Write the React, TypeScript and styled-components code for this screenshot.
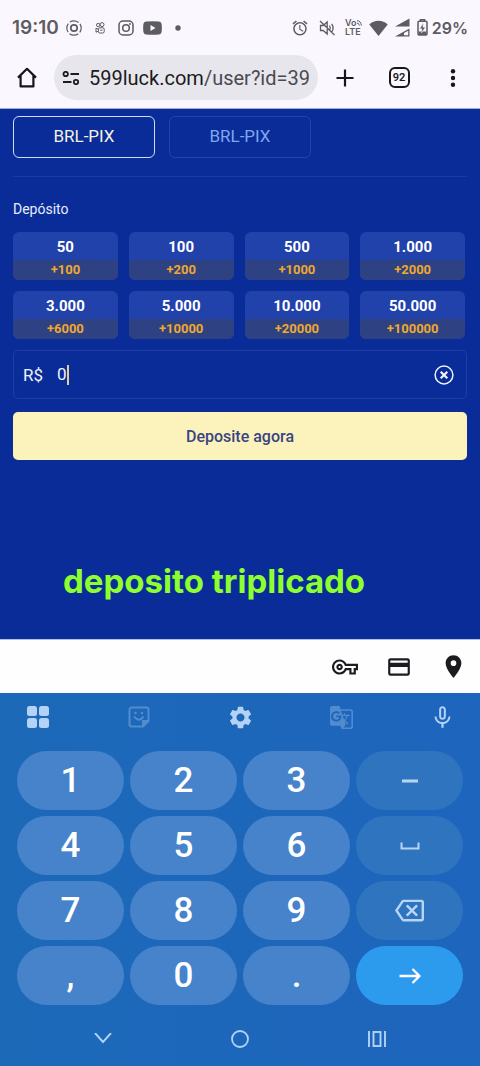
import React, { useState } from "react";
import styled, { createGlobalStyle } from "styled-components";
import {
  MdAlarm,
  MdGTranslate,
  MdLocationOn,
  MdMicNone,
  MdOutlineBackspace,
  MdOutlineCreditCard,
  MdOutlineVpnKey,
  MdSettings,
} from "react-icons/md";

const GlobalStyle = createGlobalStyle`
  *, *::before, *::after { box-sizing: border-box; }
  body { margin: 0; background: #1c67ba; font-family: Roboto, "Liberation Sans", sans-serif; }
  button, input { font-family: inherit; }
  button { border: 0; padding: 0; background: none; color: inherit; cursor: pointer; }
  svg { display: block; flex: none; }
`;

const Screen = styled.div`
  display: flex;
  flex-direction: column;
  min-height: 100vh;
`;

const StatusBar = styled.div`
  display: flex;
  justify-content: space-between;
  align-items: center;
  height: 55px;
  padding: 0 12px;
  background: #faf7fe;
  color: #5d5c61;
`;

const StatusGroup = styled.div`
  display: flex;
  align-items: center;
`;

const Clock = styled.time`
  width: 49px;
  font-family: Inter, sans-serif;
  font-size: 19px;
  font-weight: 600;
  line-height: 24px;
`;

const Battery = styled.span`
  font-family: Inter, sans-serif;
  font-size: 16px;
  font-weight: 600;
  line-height: 24px;
`;

const StatusSlot = styled.span<{ $width: number }>`
  display: flex;
  justify-content: center;
  width: ${(p) => p.$width}px;
`;

const Volte = styled.span`
  font-family: Inter, sans-serif;
  font-size: 9px;
  font-weight: 600;
  line-height: 8px;
`;

const VolteRow = styled.span`
  display: flex;
  align-items: center;
  gap: 1px;
  margin-bottom: 1px;
`;

const BrowserBar = styled.header`
  display: flex;
  align-items: center;
  height: 54px;
  padding-bottom: 8px;
  background: #faf7fe;
  border-bottom: 1px solid #9fb0da;
  color: #17171b;
`;

const BarButton = styled.button`
  display: flex;
  align-items: center;
  justify-content: center;
  flex: none;
  width: 54px;
  height: 45px;
`;

const AddressBar = styled.button`
  display: flex;
  align-items: center;
  flex: 1;
  min-width: 0;
  height: 45px;
  padding: 0 6px 0 8px;
  gap: 9px;
  border-radius: 23px;
  background: #e7e6ed;
`;

const Url = styled.span`
  overflow: hidden;
  white-space: nowrap;
  text-align: left;
  font-size: 20px;
  line-height: 28px;
  color: #4a4a50;
`;

const Domain = styled.span`
  color: #1b1b20;
`;

const TabCount = styled.span`
  display: flex;
  align-items: center;
  justify-content: center;
  width: 21px;
  height: 21px;
  border: 2px solid currentColor;
  border-radius: 6px;
  font-size: 11px;
  font-weight: 600;
`;

const Page = styled.main`
  flex: 1;
  padding: 7px 13px 37px;
  background: #0a2c98;
`;

const Methods = styled.div`
  display: flex;
  gap: 14px;
  padding-bottom: 18px;
  border-bottom: 1px solid #1c3b9f;
`;

const Method = styled.button<{ $active?: boolean }>`
  width: 142px;
  height: 42px;
  padding-bottom: 2px;
  border: 1px solid ${(p) => (p.$active ? "#d3dcf2" : "#2443a6")};
  border-radius: 6px;
  font-size: 17px;
  color: ${(p) => (p.$active ? "#f5f1e0" : "#7fa6ee")};
`;

const FieldTitle = styled.h2`
  margin: 22px 0 13px;
  font-size: 14px;
  font-weight: 400;
  line-height: 20px;
  color: #e6ecfb;
`;

const Amounts = styled.div`
  display: grid;
  grid-template-columns: repeat(4, 1fr);
  gap: 11px;
  padding-right: 2px;
`;

const Amount = styled.button`
  display: flex;
  flex-direction: column;
  height: 48px;
  overflow: hidden;
  border-radius: 6px;
  background: #2141ab;
  text-align: center;
`;

const AmountValue = styled.span`
  width: 100%;
  height: 28px;
  font-size: 15px;
  font-weight: 700;
  line-height: 30px;
  color: #ffffff;
`;

const AmountBonus = styled.span`
  width: 100%;
  height: 20px;
  background: #2e4283;
  font-size: 13px;
  font-weight: 700;
  line-height: 20px;
  color: #efa830;
`;

const AmountField = styled.div`
  display: flex;
  align-items: center;
  height: 49px;
  margin: 11px 0 13px;
  padding: 0 12px 0 9px;
  border: 1px solid #1f3ea2;
  border-radius: 5px;
  font-size: 17px;
  color: #eef2fc;
`;

const Currency = styled.label`
  width: 34px;
`;

const Entry = styled.div`
  position: relative;
  flex: 1;
`;

const EntryInput = styled.input`
  display: block;
  width: 100%;
  height: 24px;
  padding: 0 0 2px;
  border: 0;
  outline: 0;
  background: transparent;
  font-size: 17px;
  color: inherit;
  caret-color: transparent;
`;

const Caret = styled.span`
  position: absolute;
  top: 2px;
  bottom: 2px;
  width: 2px;
  background: #e0cf9a;
`;

const Submit = styled.button`
  width: 100%;
  height: 48px;
  border-radius: 5px;
  background: #fcf2bb;
  font-size: 16px;
  font-weight: 500;
  color: #394582;
`;

const Caption = styled.p`
  margin: 101px 0 0;
  padding-left: 50px;
  font-family: Inter, sans-serif;
  font-size: 33px;
  font-weight: 700;
  line-height: 40px;
  white-space: nowrap;
  color: #8dff2f;
`;

const AutofillBar = styled.div`
  display: flex;
  justify-content: flex-end;
  height: 54px;
  border-top: 1px solid #b4bfdf;
  background: #fffeff;
  color: #1c1b1f;
`;

const AutofillButton = styled.button`
  display: flex;
  align-items: center;
  justify-content: center;
  width: 54px;
  height: 53px;
`;

const Keyboard = styled.section`
  background: linear-gradient(90deg, #1c69b8, #1e65bd);
  color: #b4d1f6;
`;

const Tools = styled.div`
  display: flex;
  justify-content: space-between;
  align-items: center;
  height: 48px;
  padding: 0 20px;
`;

const Tool = styled.button<{ $dim?: boolean }>`
  display: flex;
  align-items: center;
  justify-content: center;
  width: 35px;
  height: 40px;
  opacity: ${(p) => (p.$dim ? 0.35 : 1)};
`;

const Keys = styled.div`
  display: grid;
  grid-template-columns: repeat(4, 1fr);
  gap: 6px;
  padding: 10px 17px 0;
`;

const keyFill = { digit: "#4683ca", action: "#2f74bf", enter: "#2c9bee" };

const Key = styled.button<{ $kind: keyof typeof keyFill }>`
  display: flex;
  align-items: center;
  justify-content: center;
  height: 59px;
  border-radius: 30px;
  background: ${(p) => keyFill[p.$kind]};
  font-size: 35px;
  font-weight: 500;
  color: ${(p) => (p.$kind === "action" ? "#b9d5f6" : "#ffffff")};
`;

const NavBar = styled.nav`
  display: flex;
  justify-content: space-around;
  align-items: center;
  height: 61px;
  padding: 6px 34px 0;
`;

const NavButton = styled.button`
  display: flex;
  align-items: center;
  justify-content: center;
  width: 48px;
  height: 40px;
`;

const amounts = [
  ["50", "+100"],
  ["100", "+200"],
  ["500", "+1000"],
  ["1.000", "+2000"],
  ["3.000", "+6000"],
  ["5.000", "+10000"],
  ["10.000", "+20000"],
  ["50.000", "+100000"],
];

const TargetIcon = () => (
  <svg width="16" height="16" viewBox="0 0 16 16" fill="none" stroke="currentColor">
    <circle cx="8" cy="8" r="7.2" strokeWidth="1.2" strokeDasharray="9.300 2" strokeDashoffset="4.600" />
    <circle cx="8" cy="8" r="3.200" strokeWidth="1.700" />
  </svg>
);

const CameraAppIcon = () => (
  <svg width="10" height="12" viewBox="0 0 10 12" fill="none" stroke="currentColor" strokeWidth="1">
    <circle cx="3.200" cy="3" r="1.700" />
    <circle cx="7" cy="2.600" r="2" />
    <rect x="3.400" y="5.800" width="5.800" height="5.200" rx="1.400" />
    <path d="M3.200 7.200 1 6.200v4l2.200-1M5.200 8.200h2.200" />
  </svg>
);

const InstagramIcon = () => (
  <svg width="16" height="16" viewBox="0 0 16 16" fill="none" stroke="currentColor" strokeWidth="1.500">
    <rect x="1" y="1" width="14" height="14" rx="4" />
    <circle cx="8" cy="8" r="3.300" />
    <circle cx="12" cy="4" r="0.900" fill="currentColor" stroke="none" />
  </svg>
);

const YoutubeIcon = () => (
  <svg width="19" height="14" viewBox="0 0 19 14" fill="currentColor">
    <path
      fillRule="evenodd"
      d="M3 .6Q9.500-.2 16 .6 18.300.9 18.600 3q.5 4 0 8-.3 2.100-2.600 2.400-6.500.8-13 0Q.7 13.100.4 11q-.5-4 0-8Q.7.9 3 .6ZM7.500 4v6l5-3Z"
    />
  </svg>
);

const DotIcon = () => (
  <svg width="6" height="6" viewBox="0 0 6 6" fill="currentColor">
    <circle cx="3" cy="3" r="2.700" />
  </svg>
);

const MuteIcon = () => (
  <svg width="17" height="16" viewBox="0 0 17 16" fill="none" stroke="currentColor" strokeWidth="1.300">
    <path d="M1.500 5.500h2.700l4-3.500v12l-4-3.500H1.500ZM10.500 5.500q1.600 2.500 0 5M12.700 3.800q2.800 4.200 0 8.400M1 1l14.500 14" />
  </svg>
);

const VolteWaves = () => (
  <svg width="5" height="6" viewBox="0 0 5 6" fill="none" stroke="currentColor">
    <path d="M0 .7q3.800 0 4.400 4.800M0 3q2 0 2.400 2.500" />
  </svg>
);

const WifiIcon = () => (
  <svg width="19" height="16" viewBox="0 0 19 16" fill="currentColor">
    <path d="M9.500 16 .3 4.400Q4.200.7 9.500.7t9.200 3.700Z" />
  </svg>
);

const SignalIcon = () => (
  <svg width="15" height="19" viewBox="0 0 15 19" fill="currentColor">
    <path d="M14.500.5V8.500H0Z" />
    <path fillRule="evenodd" d="M14.500 10.500v8H0ZM13.200 12.800 9 15.100v2.200h4.200Z" />
  </svg>
);

const BatteryIcon = () => (
  <svg width="11" height="17" viewBox="0 0 11 17" fill="none" stroke="currentColor">
    <path d="M3.500 2V.8h4V2" strokeWidth="1.600" />
    <rect x="1" y="2.300" width="9" height="13.700" rx="1" strokeWidth="1.500" />
    <path d="M1.500 12.500h8v3.500h-8Z" fill="currentColor" stroke="none" />
    <path d="M6.300 4 2.600 9.800h2.300L4.500 14 8.400 8.200H6Z" fill="currentColor" stroke="#faf7fe" strokeWidth=".5" />
  </svg>
);

const HomeIcon = () => (
  <svg width="20" height="21" viewBox="0 0 20 21" fill="none" stroke="currentColor" strokeWidth="2.200">
    <path d="M1 10.600 10 1.800l9 8.800M3.600 8.600v10.800h12.800V8.600" strokeLinejoin="round" />
  </svg>
);

const SiteIcon = () => (
  <svg width="18" height="14" viewBox="0 0 18 14" fill="none" stroke="#1b1b20" strokeWidth="1.800">
    <circle cx="3.700" cy="3" r="2.200" />
    <circle cx="14" cy="11" r="2.200" />
    <path d="M8.500 3H17M1 11h8.500" />
  </svg>
);

const PlusIcon = () => (
  <svg width="18" height="18" viewBox="0 0 18 18" stroke="currentColor" strokeWidth="2.200">
    <path d="M9 .5v17M.5 9h17" />
  </svg>
);

const MoreIcon = () => (
  <svg width="6" height="18" viewBox="0 0 6 18" fill="currentColor">
    <circle cx="3" cy="2.300" r="2.200" />
    <circle cx="3" cy="9" r="2.200" />
    <circle cx="3" cy="15.700" r="2.200" />
  </svg>
);

const ClearIcon = () => (
  <svg width="20" height="20" viewBox="0 0 20 20" fill="none" stroke="currentColor">
    <circle cx="10" cy="10" r="8.900" strokeWidth="1.500" />
    <path d="m6.700 6.700 6.600 6.600m0-6.600-6.600 6.600" strokeWidth="2.200" />
  </svg>
);

const GridIcon = () => (
  <svg width="22" height="22" viewBox="0 0 22 22" fill="currentColor">
    <rect x="0" y="0" width="10" height="10" rx="2.500" />
    <rect x="12" y="0" width="10" height="10" rx="2.500" />
    <rect x="0" y="12" width="10" height="10" rx="2.500" />
    <rect x="12" y="12" width="10" height="10" rx="2.500" />
  </svg>
);

const StickerIcon = () => (
  <svg width="22" height="22" viewBox="0 0 22 22" fill="none" stroke="currentColor" strokeWidth="2">
    <path d="M15 20.500H3.500a2 2 0 0 1-2-2v-15a2 2 0 0 1 2-2h15a2 2 0 0 1 2 2V15Z" />
    <path d="M15 20.500V15h5.500" fill="currentColor" />
    <path d="M6 10.500q5 6.500 9.500 0" />
    <circle cx="7.500" cy="7" r="1.300" fill="currentColor" stroke="none" />
    <circle cx="14" cy="7" r="1.300" fill="currentColor" stroke="none" />
  </svg>
);

const MinusIcon = () => (
  <svg width="16" height="4" viewBox="0 0 16 4" fill="currentColor">
    <rect y=".5" width="16" height="3" />
  </svg>
);

const SpaceIcon = () => (
  <svg width="20" height="8" viewBox="0 0 20 8" fill="none" stroke="currentColor" strokeWidth="2">
    <path d="M1.500.5v6h17v-6" />
  </svg>
);

const EnterIcon = () => (
  <svg width="22" height="16" viewBox="0 0 22 16" fill="none" stroke="currentColor" strokeWidth="2.400">
    <path d="M.5 8h20M13.500 1l7 7-7 7" strokeLinejoin="round" />
  </svg>
);

const HideIcon = () => (
  <svg width="18" height="12" viewBox="0 0 18 12" fill="none" stroke="currentColor" strokeWidth="1.900">
    <path d="m1 0 8 9 8-9" />
  </svg>
);

const CircleIcon = () => (
  <svg width="18" height="18" viewBox="0 0 18 18" fill="none" stroke="currentColor" strokeWidth="1.800">
    <circle cx="9" cy="9" r="8" />
  </svg>
);

const RecentsIcon = () => (
  <svg width="18" height="16" viewBox="0 0 18 16" fill="none" stroke="currentColor" strokeWidth="1.900">
    <path d="M1 0v16M17 0v16" />
    <rect x="5.500" y="1" width="7" height="14" />
  </svg>
);

type KeySpec = { label: string; kind: keyof typeof keyFill; icon?: React.ReactNode };

const digit = (label: string): KeySpec => ({ label, kind: "digit" });

const keys: KeySpec[] = [
  digit("1"), digit("2"), digit("3"),
  { label: "Menos", kind: "action", icon: <MinusIcon /> },
  digit("4"), digit("5"), digit("6"),
  { label: "Espaço", kind: "action", icon: <SpaceIcon /> },
  digit("7"), digit("8"), digit("9"),
  { label: "Apagar", kind: "action", icon: <MdOutlineBackspace size={29} /> },
  digit(","), digit("0"), digit("."),
  { label: "Avançar", kind: "enter", icon: <EnterIcon /> },
];

export default function App() {
  const [amount, setAmount] = useState("0");

  return (
    <Screen>
      <GlobalStyle />
      <StatusBar>
        <StatusGroup>
          <Clock>19:10</Clock>
          <StatusSlot $width={26}><TargetIcon /></StatusSlot>
          <StatusSlot $width={26}><CameraAppIcon /></StatusSlot>
          <StatusSlot $width={26}><InstagramIcon /></StatusSlot>
          <StatusSlot $width={26}><YoutubeIcon /></StatusSlot>
          <StatusSlot $width={26}><DotIcon /></StatusSlot>
        </StatusGroup>
        <StatusGroup>
          <StatusSlot $width={28}><MdAlarm size={18} /></StatusSlot>
          <StatusSlot $width={28}><MuteIcon /></StatusSlot>
          <StatusSlot $width={24}>
            <Volte>
              <VolteRow>Vo<VolteWaves /></VolteRow>
              LTE
            </Volte>
          </StatusSlot>
          <StatusSlot $width={26}><WifiIcon /></StatusSlot>
          <StatusSlot $width={22}><SignalIcon /></StatusSlot>
          <StatusSlot $width={18}><BatteryIcon /></StatusSlot>
          <Battery>29%</Battery>
        </StatusGroup>
      </StatusBar>

      <BrowserBar>
        <BarButton aria-label="Página inicial"><HomeIcon /></BarButton>
        <AddressBar>
          <SiteIcon />
          <Url><Domain>599luck.com</Domain>/user?id=39</Url>
        </AddressBar>
        <BarButton aria-label="Nova guia"><PlusIcon /></BarButton>
        <BarButton><TabCount>92</TabCount></BarButton>
        <BarButton aria-label="Mais opções"><MoreIcon /></BarButton>
      </BrowserBar>

      <Page>
        <Methods>
          <Method $active>BRL-PIX</Method>
          <Method>BRL-PIX</Method>
        </Methods>
        <FieldTitle>Depósito</FieldTitle>
        <Amounts>
          {amounts.map(([value, bonus]) => (
            <Amount key={value} onClick={() => setAmount(value.replace(".", ""))}>
              <AmountValue>{value}</AmountValue>
              <AmountBonus>{bonus}</AmountBonus>
            </Amount>
          ))}
        </Amounts>
        <AmountField>
          <Currency htmlFor="amount">R$</Currency>
          <Entry>
            <EntryInput
              id="amount"
              inputMode="decimal"
              value={amount}
              onChange={(e) => setAmount(e.target.value)}
            />
            <Caret style={{ left: `${amount.length}ch` }} />
          </Entry>
          <button aria-label="Limpar" onClick={() => setAmount("")}><ClearIcon /></button>
        </AmountField>
        <Submit>Deposite agora</Submit>
        <Caption>deposito triplicado</Caption>
      </Page>

      <AutofillBar>
        <AutofillButton aria-label="Senhas"><MdOutlineVpnKey size={26} /></AutofillButton>
        <AutofillButton aria-label="Cartões"><MdOutlineCreditCard size={26} /></AutofillButton>
        <AutofillButton aria-label="Endereços"><MdLocationOn size={27} /></AutofillButton>
      </AutofillBar>

      <Keyboard>
        <Tools>
          <Tool aria-label="Menu"><GridIcon /></Tool>
          <Tool $dim aria-label="Figurinhas"><StickerIcon /></Tool>
          <Tool aria-label="Configurações"><MdSettings size={27} /></Tool>
          <Tool $dim aria-label="Traduzir"><MdGTranslate size={25} /></Tool>
          <Tool aria-label="Voz"><MdMicNone size={27} /></Tool>
        </Tools>
        <Keys>
          {keys.map((k) => (
            <Key key={k.label} $kind={k.kind} aria-label={k.label}>
              {k.icon ?? k.label}
            </Key>
          ))}
        </Keys>
        <NavBar>
          <NavButton aria-label="Ocultar teclado"><HideIcon /></NavButton>
          <NavButton aria-label="Início"><CircleIcon /></NavButton>
          <NavButton aria-label="Recentes"><RecentsIcon /></NavButton>
        </NavBar>
      </Keyboard>
    </Screen>
  );
}
